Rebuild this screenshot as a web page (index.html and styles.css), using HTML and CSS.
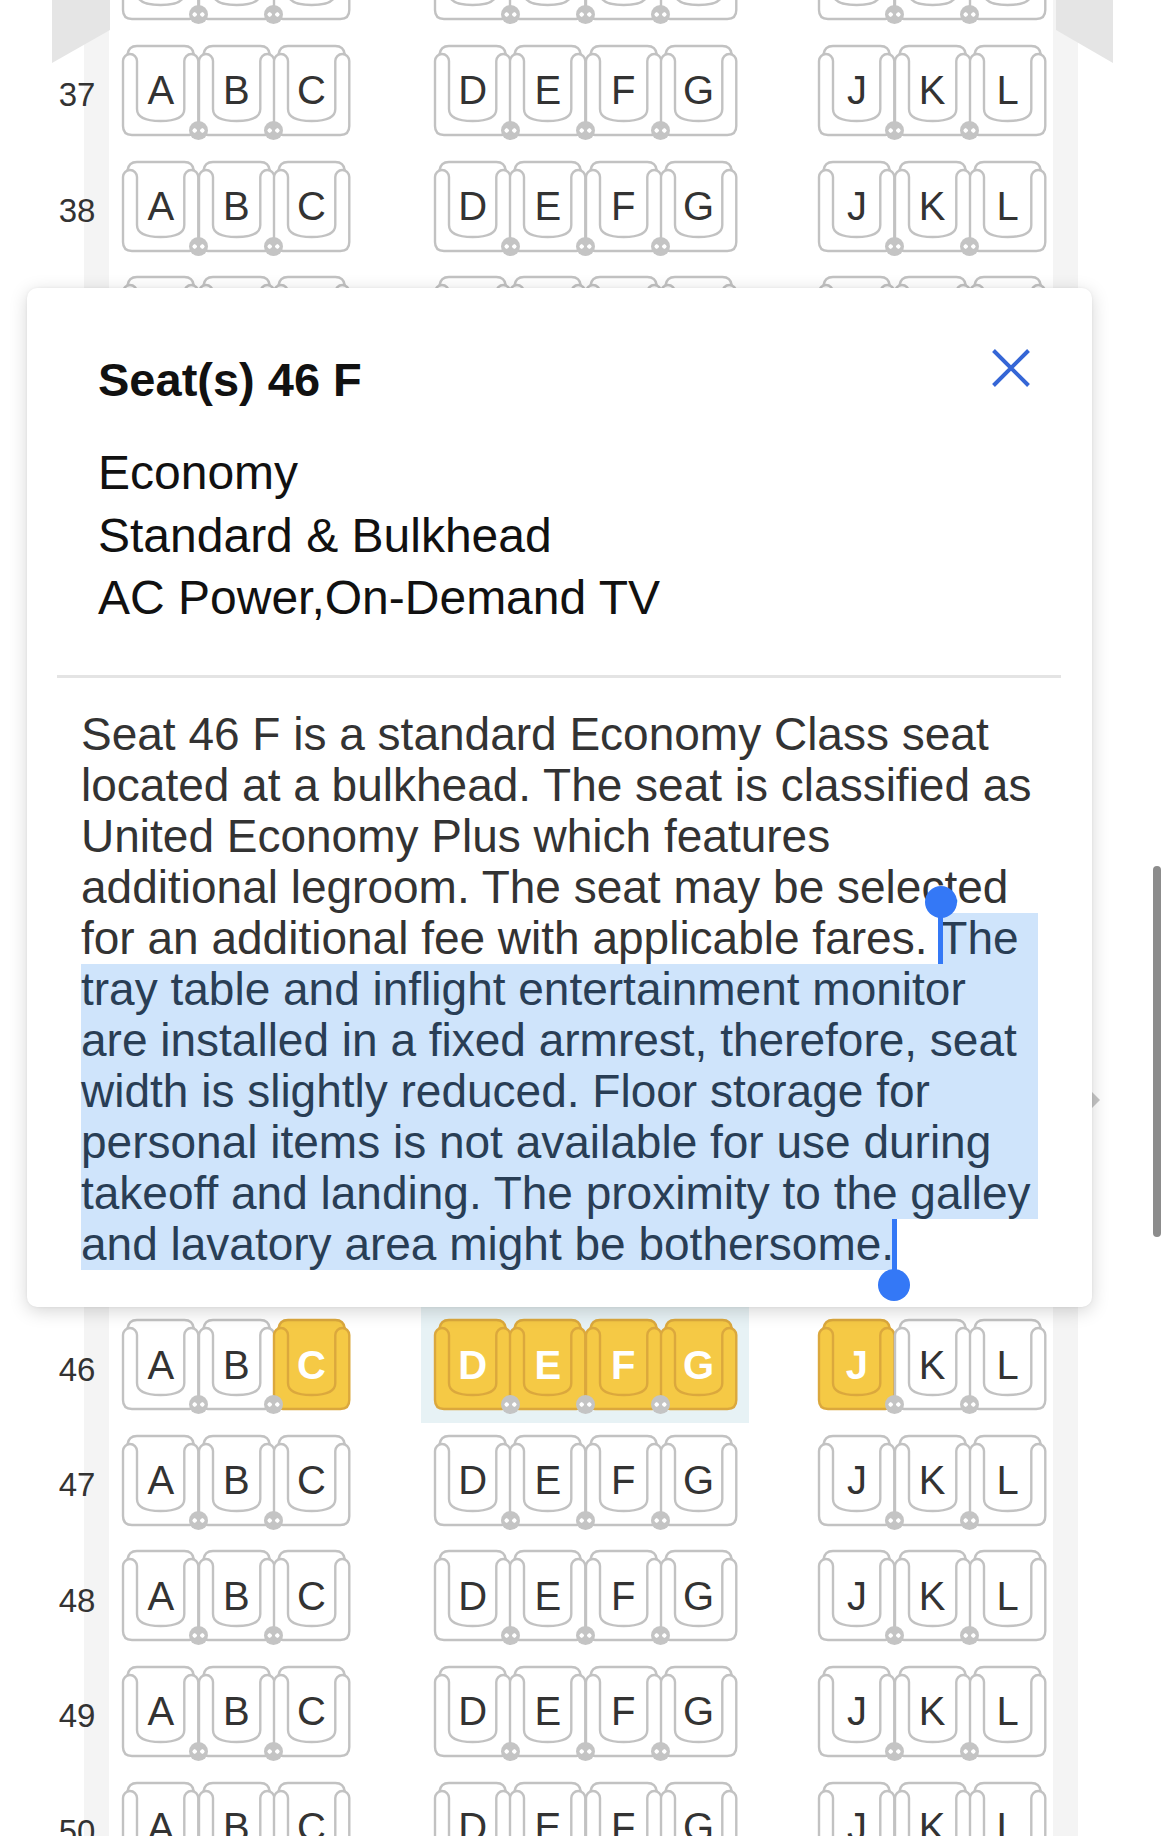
FILE: index.html
```html
<!DOCTYPE html>
<html lang="en">
<head>
<meta charset="utf-8">
<title>Seat map</title>
<link rel="stylesheet" href="styles.css">
</head>
<body>
<svg class="defs" aria-hidden="true" width="0" height="0">
  <defs>
    <g id="seat">
      <path stroke="none" d="M0 16 A7 7 0 0 1 4.5 9.5 Q5.5 1 14 1 H61.3 Q69.8 1 70.8 9.5 A7 7 0 0 1 75.3 16 V81 Q75.3 90 66.3 90 H9 Q0 90 0 81 Z"/>
      <path fill="none" d="M0 16 V81 Q0 90 9 90 H66.3 Q75.3 90 75.3 81 V16"/>
      <path fill="none" d="M0 16 A7 7 0 0 1 14 16 M61.3 16 A7 7 0 0 1 75.3 16"/>
      <path fill="none" d="M4.5 9.5 Q5.5 1 14 1 H61.3 Q69.8 1 70.8 9.5"/>
      <path fill="none" d="M14 16 V64 C14 72.5 24 76 37.65 76 C51.3 76 61.3 72.5 61.3 64 V16"/>
    </g>
  </defs>
</svg>

<div class="screen">
  <div class="cabin">
    <!-- row 36 is scrolled mostly out of view: only the seat bases show -->
    <div class="row"><span class="num"></span>
      <div class="block abc"><div class="seat"><svg viewBox="0 0 75.3 92"><use href="#seat"/></svg></div><div class="seat"><svg viewBox="0 0 75.3 92"><use href="#seat"/></svg></div><div class="seat"><svg viewBox="0 0 75.3 92"><use href="#seat"/></svg></div></div>
      <div class="block defg"><div class="seat"><svg viewBox="0 0 75.3 92"><use href="#seat"/></svg></div><div class="seat"><svg viewBox="0 0 75.3 92"><use href="#seat"/></svg></div><div class="seat"><svg viewBox="0 0 75.3 92"><use href="#seat"/></svg></div><div class="seat"><svg viewBox="0 0 75.3 92"><use href="#seat"/></svg></div></div>
      <div class="block jkl"><div class="seat"><svg viewBox="0 0 75.3 92"><use href="#seat"/></svg></div><div class="seat"><svg viewBox="0 0 75.3 92"><use href="#seat"/></svg></div><div class="seat"><svg viewBox="0 0 75.3 92"><use href="#seat"/></svg></div></div>
    </div>
    <div class="row"><span class="num">37</span>
      <div class="block abc"><div class="seat"><svg viewBox="0 0 75.3 92"><use href="#seat"/></svg><span>A</span></div><div class="seat"><svg viewBox="0 0 75.3 92"><use href="#seat"/></svg><span>B</span></div><div class="seat"><svg viewBox="0 0 75.3 92"><use href="#seat"/></svg><span>C</span></div></div>
      <div class="block defg"><div class="seat"><svg viewBox="0 0 75.3 92"><use href="#seat"/></svg><span>D</span></div><div class="seat"><svg viewBox="0 0 75.3 92"><use href="#seat"/></svg><span>E</span></div><div class="seat"><svg viewBox="0 0 75.3 92"><use href="#seat"/></svg><span>F</span></div><div class="seat"><svg viewBox="0 0 75.3 92"><use href="#seat"/></svg><span>G</span></div></div>
      <div class="block jkl"><div class="seat"><svg viewBox="0 0 75.3 92"><use href="#seat"/></svg><span>J</span></div><div class="seat"><svg viewBox="0 0 75.3 92"><use href="#seat"/></svg><span>K</span></div><div class="seat"><svg viewBox="0 0 75.3 92"><use href="#seat"/></svg><span>L</span></div></div>
    </div>
    <div class="row"><span class="num">38</span>
      <div class="block abc"><div class="seat"><svg viewBox="0 0 75.3 92"><use href="#seat"/></svg><span>A</span></div><div class="seat"><svg viewBox="0 0 75.3 92"><use href="#seat"/></svg><span>B</span></div><div class="seat"><svg viewBox="0 0 75.3 92"><use href="#seat"/></svg><span>C</span></div></div>
      <div class="block defg"><div class="seat"><svg viewBox="0 0 75.3 92"><use href="#seat"/></svg><span>D</span></div><div class="seat"><svg viewBox="0 0 75.3 92"><use href="#seat"/></svg><span>E</span></div><div class="seat"><svg viewBox="0 0 75.3 92"><use href="#seat"/></svg><span>F</span></div><div class="seat"><svg viewBox="0 0 75.3 92"><use href="#seat"/></svg><span>G</span></div></div>
      <div class="block jkl"><div class="seat"><svg viewBox="0 0 75.3 92"><use href="#seat"/></svg><span>J</span></div><div class="seat"><svg viewBox="0 0 75.3 92"><use href="#seat"/></svg><span>K</span></div><div class="seat"><svg viewBox="0 0 75.3 92"><use href="#seat"/></svg><span>L</span></div></div>
    </div>
    <div class="row"><span class="num"></span>
      <div class="block abc"><div class="seat"><svg viewBox="0 0 75.3 92"><use href="#seat"/></svg></div><div class="seat"><svg viewBox="0 0 75.3 92"><use href="#seat"/></svg></div><div class="seat"><svg viewBox="0 0 75.3 92"><use href="#seat"/></svg></div></div>
      <div class="block defg"><div class="seat"><svg viewBox="0 0 75.3 92"><use href="#seat"/></svg></div><div class="seat"><svg viewBox="0 0 75.3 92"><use href="#seat"/></svg></div><div class="seat"><svg viewBox="0 0 75.3 92"><use href="#seat"/></svg></div><div class="seat"><svg viewBox="0 0 75.3 92"><use href="#seat"/></svg></div></div>
      <div class="block jkl"><div class="seat"><svg viewBox="0 0 75.3 92"><use href="#seat"/></svg></div><div class="seat"><svg viewBox="0 0 75.3 92"><use href="#seat"/></svg></div><div class="seat"><svg viewBox="0 0 75.3 92"><use href="#seat"/></svg></div></div>
    </div>
    <!-- rows 40–45 and the mid-cabin galley sit under the details sheet -->
    <div class="cabin-gap"></div>
    <div class="row"><span class="num">46</span>
      <div class="block abc"><div class="seat"><svg viewBox="0 0 75.3 92"><use href="#seat"/></svg><span>A</span></div><div class="seat"><svg viewBox="0 0 75.3 92"><use href="#seat"/></svg><span>B</span></div><div class="seat on"><svg viewBox="0 0 75.3 92"><use href="#seat"/></svg><span>C</span></div></div>
      <div class="block defg picked"><div class="seat on"><svg viewBox="0 0 75.3 92"><use href="#seat"/></svg><span>D</span></div><div class="seat on"><svg viewBox="0 0 75.3 92"><use href="#seat"/></svg><span>E</span></div><div class="seat on"><svg viewBox="0 0 75.3 92"><use href="#seat"/></svg><span>F</span></div><div class="seat on"><svg viewBox="0 0 75.3 92"><use href="#seat"/></svg><span>G</span></div></div>
      <div class="block jkl"><div class="seat on"><svg viewBox="0 0 75.3 92"><use href="#seat"/></svg><span>J</span></div><div class="seat"><svg viewBox="0 0 75.3 92"><use href="#seat"/></svg><span>K</span></div><div class="seat"><svg viewBox="0 0 75.3 92"><use href="#seat"/></svg><span>L</span></div></div>
    </div>
    <div class="row"><span class="num">47</span>
      <div class="block abc"><div class="seat"><svg viewBox="0 0 75.3 92"><use href="#seat"/></svg><span>A</span></div><div class="seat"><svg viewBox="0 0 75.3 92"><use href="#seat"/></svg><span>B</span></div><div class="seat"><svg viewBox="0 0 75.3 92"><use href="#seat"/></svg><span>C</span></div></div>
      <div class="block defg"><div class="seat"><svg viewBox="0 0 75.3 92"><use href="#seat"/></svg><span>D</span></div><div class="seat"><svg viewBox="0 0 75.3 92"><use href="#seat"/></svg><span>E</span></div><div class="seat"><svg viewBox="0 0 75.3 92"><use href="#seat"/></svg><span>F</span></div><div class="seat"><svg viewBox="0 0 75.3 92"><use href="#seat"/></svg><span>G</span></div></div>
      <div class="block jkl"><div class="seat"><svg viewBox="0 0 75.3 92"><use href="#seat"/></svg><span>J</span></div><div class="seat"><svg viewBox="0 0 75.3 92"><use href="#seat"/></svg><span>K</span></div><div class="seat"><svg viewBox="0 0 75.3 92"><use href="#seat"/></svg><span>L</span></div></div>
    </div>
    <div class="row"><span class="num">48</span>
      <div class="block abc"><div class="seat"><svg viewBox="0 0 75.3 92"><use href="#seat"/></svg><span>A</span></div><div class="seat"><svg viewBox="0 0 75.3 92"><use href="#seat"/></svg><span>B</span></div><div class="seat"><svg viewBox="0 0 75.3 92"><use href="#seat"/></svg><span>C</span></div></div>
      <div class="block defg"><div class="seat"><svg viewBox="0 0 75.3 92"><use href="#seat"/></svg><span>D</span></div><div class="seat"><svg viewBox="0 0 75.3 92"><use href="#seat"/></svg><span>E</span></div><div class="seat"><svg viewBox="0 0 75.3 92"><use href="#seat"/></svg><span>F</span></div><div class="seat"><svg viewBox="0 0 75.3 92"><use href="#seat"/></svg><span>G</span></div></div>
      <div class="block jkl"><div class="seat"><svg viewBox="0 0 75.3 92"><use href="#seat"/></svg><span>J</span></div><div class="seat"><svg viewBox="0 0 75.3 92"><use href="#seat"/></svg><span>K</span></div><div class="seat"><svg viewBox="0 0 75.3 92"><use href="#seat"/></svg><span>L</span></div></div>
    </div>
    <div class="row"><span class="num">49</span>
      <div class="block abc"><div class="seat"><svg viewBox="0 0 75.3 92"><use href="#seat"/></svg><span>A</span></div><div class="seat"><svg viewBox="0 0 75.3 92"><use href="#seat"/></svg><span>B</span></div><div class="seat"><svg viewBox="0 0 75.3 92"><use href="#seat"/></svg><span>C</span></div></div>
      <div class="block defg"><div class="seat"><svg viewBox="0 0 75.3 92"><use href="#seat"/></svg><span>D</span></div><div class="seat"><svg viewBox="0 0 75.3 92"><use href="#seat"/></svg><span>E</span></div><div class="seat"><svg viewBox="0 0 75.3 92"><use href="#seat"/></svg><span>F</span></div><div class="seat"><svg viewBox="0 0 75.3 92"><use href="#seat"/></svg><span>G</span></div></div>
      <div class="block jkl"><div class="seat"><svg viewBox="0 0 75.3 92"><use href="#seat"/></svg><span>J</span></div><div class="seat"><svg viewBox="0 0 75.3 92"><use href="#seat"/></svg><span>K</span></div><div class="seat"><svg viewBox="0 0 75.3 92"><use href="#seat"/></svg><span>L</span></div></div>
    </div>
    <div class="row"><span class="num">50</span>
      <div class="block abc"><div class="seat"><svg viewBox="0 0 75.3 92"><use href="#seat"/></svg><span>A</span></div><div class="seat"><svg viewBox="0 0 75.3 92"><use href="#seat"/></svg><span>B</span></div><div class="seat"><svg viewBox="0 0 75.3 92"><use href="#seat"/></svg><span>C</span></div></div>
      <div class="block defg"><div class="seat"><svg viewBox="0 0 75.3 92"><use href="#seat"/></svg><span>D</span></div><div class="seat"><svg viewBox="0 0 75.3 92"><use href="#seat"/></svg><span>E</span></div><div class="seat"><svg viewBox="0 0 75.3 92"><use href="#seat"/></svg><span>F</span></div><div class="seat"><svg viewBox="0 0 75.3 92"><use href="#seat"/></svg><span>G</span></div></div>
      <div class="block jkl"><div class="seat"><svg viewBox="0 0 75.3 92"><use href="#seat"/></svg><span>J</span></div><div class="seat"><svg viewBox="0 0 75.3 92"><use href="#seat"/></svg><span>K</span></div><div class="seat"><svg viewBox="0 0 75.3 92"><use href="#seat"/></svg><span>L</span></div></div>
    </div>
  </div>

  <div class="exit exit-left"></div>
  <div class="exit exit-right"></div>
  <div class="pointer"></div>

  <section class="popup">
    <header class="popup-head">
      <h2 class="popup-title">Seat(s) 46 F</h2>
      <div class="popup-info">
        <div>Economy</div>
        <div>Standard &amp; Bulkhead</div>
        <div>AC Power,On-Demand TV</div>
      </div>
      <button class="close" aria-label="Close">
        <svg viewBox="0 0 38 38"><path d="M1.5 1.5 L36.5 36.5 M36.5 1.5 L1.5 36.5"/></svg>
      </button>
    </header>
    <div class="divider"></div>
    <div class="popup-desc">
      <p>Seat 46 F is a standard Economy Class seat located at a bulkhead. The seat is classified as United Economy Plus which features additional legroom. The seat may be selected for an additional fee with applicable fares. The tray table and inflight entertainment monitor are installed in a fixed armrest, therefore, seat width is slightly reduced. Floor storage for personal items is not available for use during takeoff and landing. The proximity to the galley and lavatory area might be bothersome.</p>
      <span class="sel sel-first"></span>
      <span class="sel sel-mid"></span>
      <span class="sel sel-last"></span>
      <span class="handle handle-start"></span>
      <span class="handle handle-end"></span>
    </div>
  </section>

  <div class="scrollbar"></div>
</div>
</body>
</html>
```

FILE: styles.css
```css
html, body {
  margin: 0;
  padding: 0;
  background: #fff;
}

body {
  font-family: "Liberation Sans", Arial, Helvetica, sans-serif;
  color: #333;
}

.defs {
  position: absolute;
  width: 0;
  height: 0;
  overflow: hidden;
}

.screen {
  position: relative;
  width: 1170px;
  height: 1836px;
  overflow: hidden;
  background: #fff;
}

/* ---------- cabin / seat map ---------- */
.cabin {
  margin-top: -70.6px;
  padding-left: 40px;
  background: linear-gradient(90deg,
    transparent 84px, #f4f4f4 84px, #f4f4f4 109px, transparent 109px,
    transparent 1053px, #f4f4f4 1053px, #f4f4f4 1078px, transparent 1078px);
}

.row {
  display: flex;
  align-items: flex-start;
  height: 115.6px;
}

/* six rows plus the galley */
.cabin-gap {
  height: 927.5px;
}

.num {
  width: 74px;
  margin-top: 33.4px;
  text-align: center;
  font-size: 33px;
  line-height: 33px;
  color: #333;
}

.block {
  display: flex;
}

.abc { margin-left: 9.3px; }
.defg { margin-left: 85.8px; }
.jkl { margin-left: 83.1px; }

.block.picked {
  background: #e7f2f5;
  padding: 12px 13px 12px 14px;
  margin: -12px -13px -12px 71.8px;
}

.seat {
  position: relative;
  display: grid;
  width: 75.3px;
  height: 92px;
}

.seat svg {
  grid-area: 1 / 1;
  width: 75.3px;
  height: 92px;
  overflow: visible;
}

.seat use {
  fill: #fff;
  stroke: #c2c2c2;
  stroke-width: 2.4;
}

.seat span {
  grid-area: 1 / 1;
  align-self: start;
  justify-self: center;
  margin-top: 25.4px;
  font-size: 40px;
  line-height: 40px;
  color: #333;
}

/* armrest joint between two neighbouring seats */
.seat:not(:last-child)::after {
  content: "";
  position: absolute;
  right: -9.5px;
  top: 76px;
  width: 19px;
  height: 19px;
  border-radius: 50%;
  z-index: 1;
  background:
    radial-gradient(circle at 5.6px 9.5px, #fff 1.9px, transparent 2.4px),
    radial-gradient(circle at 13.4px 9.5px, #fff 1.9px, transparent 2.4px),
    #c4c4c4;
}

.seat.on use {
  fill: #f5c945;
  stroke: #dba83d;
}

.seat.on span {
  color: #fff;
  font-weight: 700;
}

/* exit markers at the top of the section */
.exit {
  position: absolute;
  top: 0;
  width: 58px;
  height: 63px;
  background: #e5e5e5;
}

.exit-left {
  left: 52px;
  clip-path: polygon(0 0, 100% 0, 100% 30px, 0 100%);
}

.exit-right {
  left: 1056px;
  width: 57px;
  clip-path: polygon(0 0, 100% 0, 100% 100%, 0 30px);
}

.pointer {
  position: absolute;
  left: 1092px;
  top: 1092px;
  width: 0;
  height: 0;
  border-left: 8px solid #c6c6c6;
  border-top: 8px solid transparent;
  border-bottom: 8px solid transparent;
}

.scrollbar {
  position: absolute;
  z-index: 20;
  left: 1152.5px;
  top: 866px;
  width: 8px;
  height: 371px;
  border-radius: 4px;
  background: #8c8c8c;
}

/* ---------- seat details popup ---------- */
.popup {
  position: absolute;
  z-index: 10;
  left: 27px;
  top: 288px;
  width: 1065px;
  padding-bottom: 37.5px;
  background: #fff;
  border-radius: 10px;
  box-shadow: 0 4px 18px rgba(0, 0, 0, 0.17), 0 0 3px rgba(0, 0, 0, 0.06);
}

.popup-head {
  position: relative;
  padding: 64px 62px 45px 71px;
  color: #111;
}

.popup-title {
  margin: 0;
  font-size: 47px;
  line-height: 56px;
  font-weight: 700;
  color: #111;
}

.popup-info {
  margin-top: 34px;
  font-size: 48px;
  line-height: 62.5px;
}

.close {
  position: absolute;
  top: 61px;
  right: 62px;
  width: 38px;
  height: 38px;
  padding: 0;
  border: 0;
  background: transparent;
}

.close svg {
  display: block;
  width: 38px;
  height: 38px;
}

.close path {
  fill: none;
  stroke: #3566d6;
  stroke-width: 4;
}

.divider {
  height: 3px;
  margin: 0 31px 0 30px;
  background: #e4e4e4;
}

.popup-desc {
  position: relative;
  margin: 31px 54px 0;
}

.popup-desc p {
  margin: 0;
  font-size: 46px;
  line-height: 51px;
  color: #333;
}

/* text selection overlay */
.sel {
  position: absolute;
  background: rgba(0, 110, 235, 0.19);
}

.sel-first {
  top: 204px;
  left: 858px;
  right: 0;
  height: 51px;
}

.sel-mid {
  top: 255px;
  left: 0;
  right: 0;
  height: 255px;
}

.sel-last {
  top: 510px;
  left: 0;
  width: 813px;
  height: 51px;
}

.handle {
  position: absolute;
  width: 5px;
  background: #3478f6;
}

.handle::before {
  content: "";
  position: absolute;
  left: -13.5px;
  width: 32px;
  height: 32px;
  border-radius: 50%;
  background: #3478f6;
}

.handle-start {
  left: 857px;
  top: 193px;
  height: 62px;
}

.handle-start::before {
  top: -16px;
}

.handle-end {
  left: 810.5px;
  top: 510px;
  height: 66.5px;
}

.handle-end::before {
  bottom: -16px;
}
```
